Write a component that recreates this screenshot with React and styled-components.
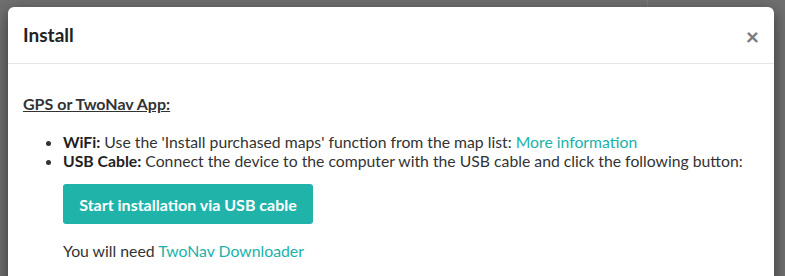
import React from "react";
import styled, { createGlobalStyle } from "styled-components";

const Global = createGlobalStyle`
  html, body { margin: 0; padding: 0; }
  body {
    width: 785px;
    height: 276px;
    overflow: hidden;
    background: #6f6f6f;
    font-family: Lato, "Noto Sans", sans-serif;
    color: #333;
  }
`;

const Page = styled.div`
  position: relative;
  width: 785px;
  height: 276px;
  background: linear-gradient(to right, transparent 647px, #7c7c7c 647px, #7c7c7c 648px, transparent 648px), #6f6f6f;
`;

const Dialog = styled.div`
  position: absolute;
  left: 8px;
  top: 7px;
  width: 766px;
  height: 300px;
  background: #fff;
  border-radius: 6px;
  box-shadow: 0 5px 15px rgba(0, 0, 0, 0.5);
  overflow: hidden;
`;

const Header = styled.div`
  display: flex;
  align-items: center;
  justify-content: space-between;
  padding: 15px;
  border-bottom: 1px solid #e5e5e5;
`;

const Title = styled.h4`
  margin: 0;
  font-size: 19px;
  line-height: 26px;
  font-weight: 700;
  color: #222;
`;

const Close = styled.button`
  border: 0;
  background: none;
  padding: 0;
  margin-top: 2px;
  font-family: inherit;
  font-size: 23px;
  font-weight: 900;
  line-height: 1;
  color: #7d7d7d;
  cursor: pointer;
`;

const Body = styled.div`
  padding: 29px 15px 15px;
`;

const SectionTitle = styled.h5`
  margin: 0 0 18px;
  font-size: 16px;
  line-height: 22px;
  font-weight: 700;
  color: #333;
  text-decoration: underline;
`;

const List = styled.ul`
  margin: 0;
  padding-left: 40px;
  font-size: 15.75px;
  line-height: 18.5px;
`;

const Item = styled.li``;

const Strong = styled.strong`
  font-weight: 700;
  color: #222;
`;

const Link = styled.a`
  color: #20b2aa;
  text-decoration: none;
`;

const Action = styled.div`
  padding-left: 40px;
  padding-top: 14px;
  display: flex;
  flex-direction: column;
  align-items: flex-start;
  gap: 17px;
`;

const Button = styled.button`
  width: 250px;
  height: 40px;
  border: 0;
  border-radius: 3px;
  background: #1fb3aa;
  color: #fff;
  font-family: inherit;
  font-size: 16px;
  font-weight: 700;
  cursor: pointer;
`;

const Note = styled.p`
  margin: 0;
  font-size: 15.8px;
  line-height: 20px;
  color: #333;
`;

export default function App() {
  return (
    <>
      <Global />
      <Page>
        <Dialog>
          <Header>
            <Title>Install</Title>
            <Close aria-label="Close">×</Close>
          </Header>
          <Body>
            <SectionTitle>GPS or TwoNav App:</SectionTitle>
            <List>
              <Item>
                <Strong>WiFi:</Strong> Use the 'Install purchased maps' function from the map list:{" "}
                <Link href="#">More information</Link>
              </Item>
              <Item>
                <Strong>USB Cable:</Strong> Connect the device to the computer with the USB cable and click the following button:
              </Item>
            </List>
            <Action>
              <Button>Start installation via USB cable</Button>
              <Note>
                You will need <Link href="#">TwoNav Downloader</Link>
              </Note>
            </Action>
          </Body>
        </Dialog>
      </Page>
    </>
  );
}
